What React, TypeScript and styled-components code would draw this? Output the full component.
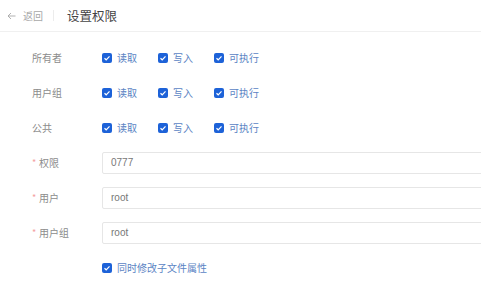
import React from "react";
import styled, { createGlobalStyle } from "styled-components";

const Global = createGlobalStyle`
  html, body { margin: 0; padding: 0; background: #fff; overflow: hidden; }
  body { font-family: "Noto Sans CJK SC", "Noto Sans", sans-serif; }
`;

const Page = styled.div`
  width: 481px;
  height: 294px;
  overflow: hidden;
`;

const Header = styled.div`
  height: 31px;
  display: flex;
  align-items: center;
  padding-left: 7px;
  border-bottom: 1px solid #f0f0f0;
`;

const Back = styled.span`
  display: flex;
  align-items: center;
  gap: 7px;
  font-size: 10px;
  color: #a8a8a8;
`;

const Divider = styled.span`
  width: 1px;
  height: 11px;
  background: #ececec;
  margin: 0 13px 0 10px;
`;

const Title = styled.span`
  font-size: 12.5px;
  color: #444;
`;

const Form = styled.div`
  padding: 8px 0 0 32px;
`;

const Row = styled.div`
  height: 35px;
  display: flex;
  align-items: center;
`;

const Label = styled.div`
  width: 70px;
  flex: none;
  font-size: 10px;
  color: #8c8c8c;
  display: flex;
  align-items: center;
`;

const Star = styled.span`
  color: #f4a0a0;
  font-size: 9px;
  margin-right: 2px;
  width: 5px;
`;

const Group = styled.div`
  display: flex;
  align-items: center;
  gap: 21px;
`;

const Check = styled.label`
  display: flex;
  align-items: center;
  gap: 5px;
  font-size: 10px;
  color: #5b84c4;
`;

const Box = styled.span`
  width: 10px;
  height: 10px;
  border-radius: 2px;
  background: #1d62d8;
  display: flex;
  align-items: center;
  justify-content: center;
`;

const Input = styled.div`
  width: 450px;
  flex: none;
  height: 22px;
  box-sizing: border-box;
  border: 1px solid #e6e6e6;
  border-radius: 2px;
  display: flex;
  align-items: center;
  padding-left: 8px;
  font-family: "Liberation Sans", Arial, sans-serif;
  font-size: 10px;
  color: #777;
`;

const Checkbox = ({ label }: { label: string }) => (
  <Check>
    <Box>
      <svg width="8" height="8" viewBox="0 0 8 8">
        <path d="M1.5 4.2 L3.2 5.8 L6.5 2.3" fill="none" stroke="#fff" strokeWidth="1.2" />
      </svg>
    </Box>
    {label}
  </Check>
);

const permRows = ["所有者", "用户组", "公共"];
const inputRows = [
  ["权限", "0777"],
  ["用户", "root"],
  ["用户组", "root"],
];

export default function App() {
  return (
    <Page>
      <Global />
      <Header>
        <Back>
          <svg width="9" height="8" viewBox="0 0 9 8">
            <path d="M8.5 4 H1 M4 1 L1 4 L4 7" fill="none" stroke="#a8a8a8" strokeWidth="0.9" />
          </svg>
          返回
        </Back>
        <Divider />
        <Title>设置权限</Title>
      </Header>
      <Form>
        {permRows.map((r) => (
          <Row key={r}>
            <Label>{r}</Label>
            <Group>
              <Checkbox label="读取" />
              <Checkbox label="写入" />
              <Checkbox label="可执行" />
            </Group>
          </Row>
        ))}
        {inputRows.map(([l, v]) => (
          <Row key={l}>
            <Label>
              <Star>*</Star>
              {l}
            </Label>
            <Input>{v}</Input>
          </Row>
        ))}
        <Row>
          <Label />
          <Checkbox label="同时修改子文件属性" />
        </Row>
      </Form>
    </Page>
  );
}
